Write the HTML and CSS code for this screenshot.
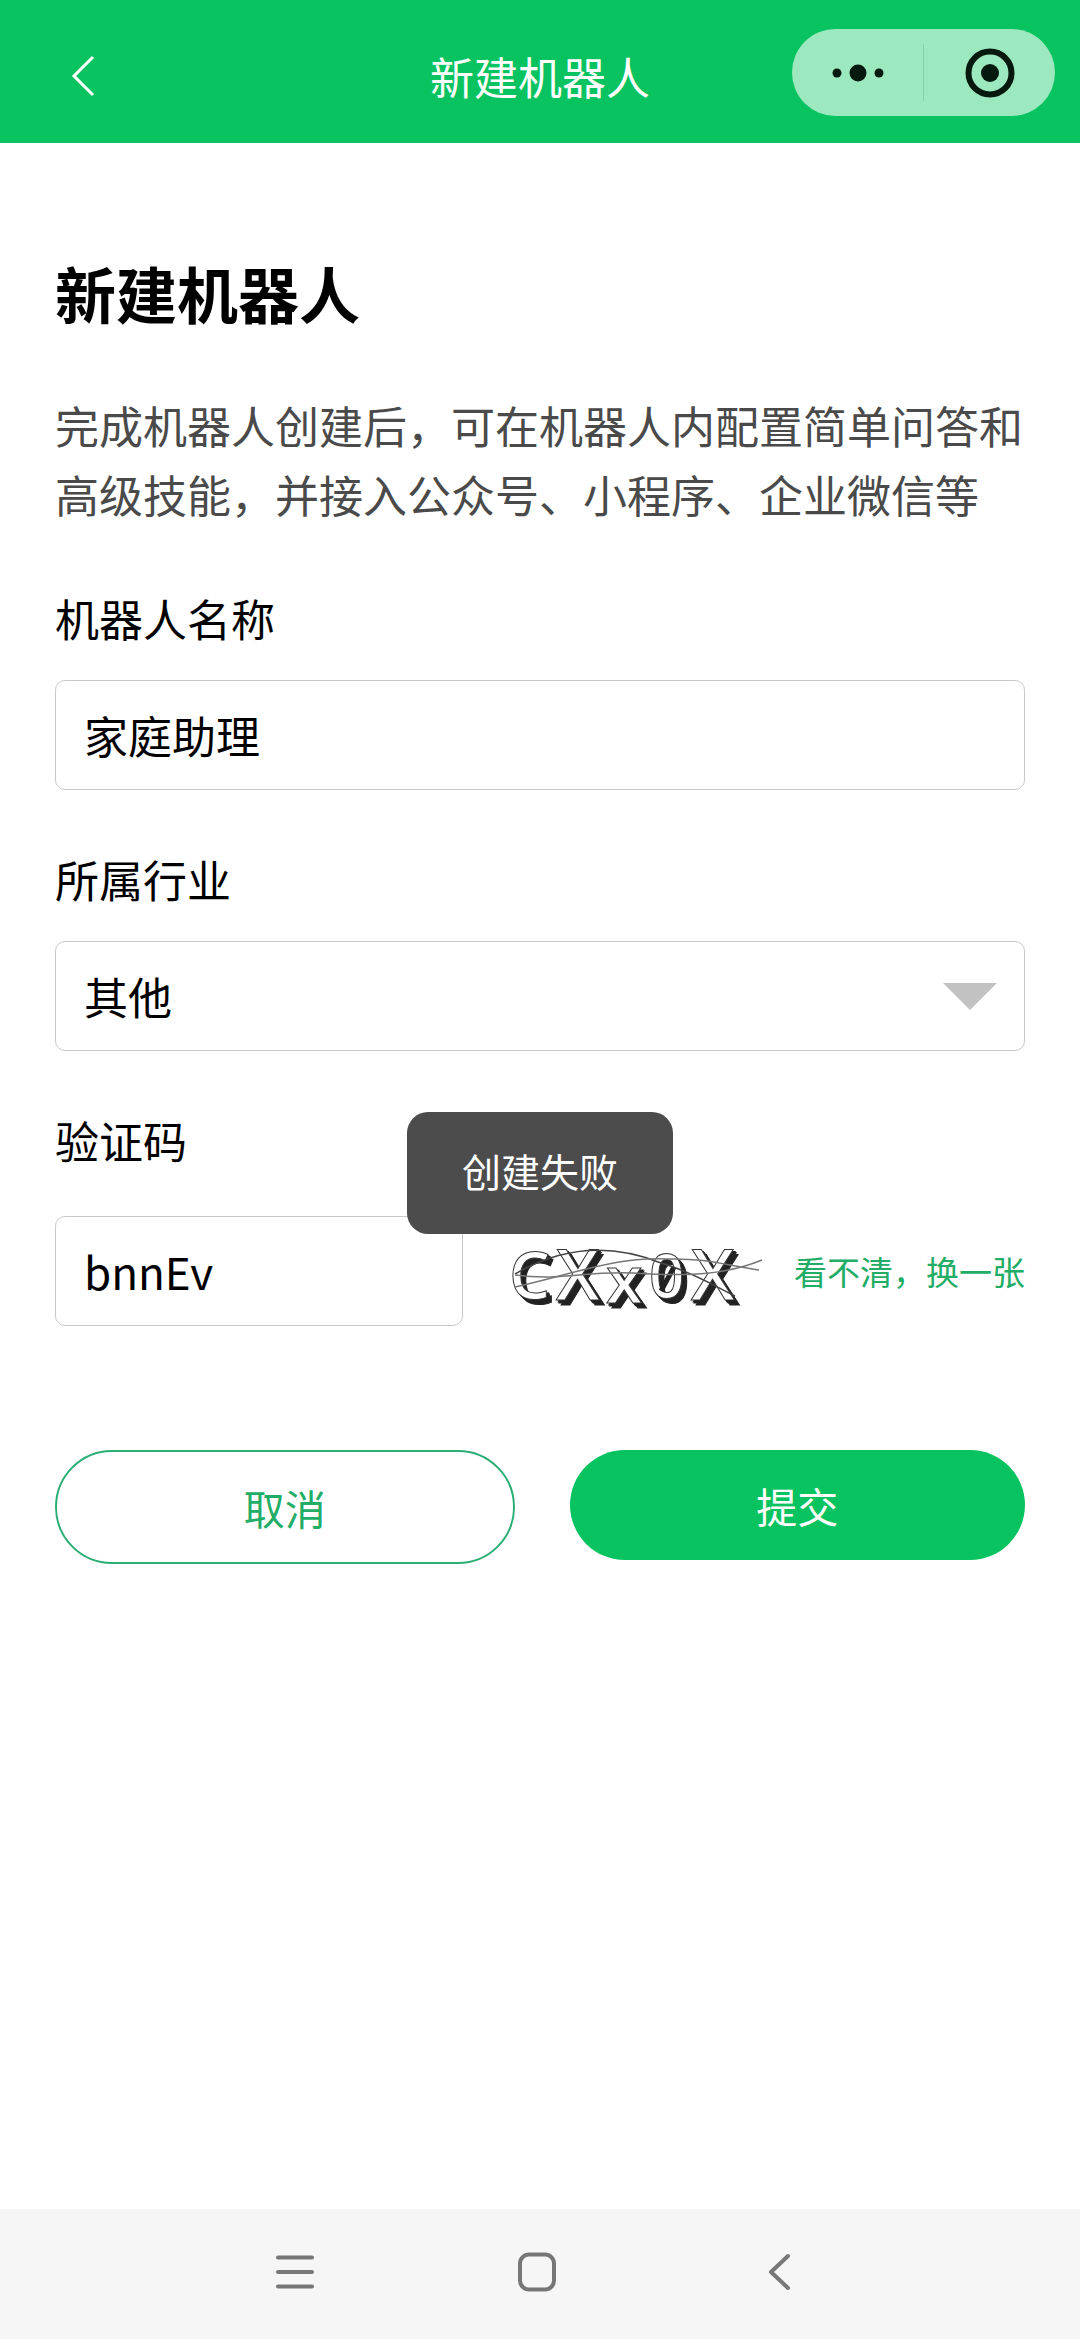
FILE: index.html
```html
<!DOCTYPE html>
<html lang="zh-CN">
    <head>
        <meta charset="utf-8">
        <meta name="viewport" content="width=device-width, initial-scale=1">
        <title>新建机器人</title>
        <link rel="stylesheet" href="styles.css">
    </head>
    <body>
        <header class="header">
            <button class="icon-button back" type="button" aria-label="返回">
                <svg width="26" height="44" viewBox="0 0 26 44"><path d="M23 3 L4 22 L23 41" fill="none" stroke="#fff" stroke-width="3"/></svg>
            </button>
            <div class="title">新建机器人</div>
            <div class="capsule">
                <button class="icon-button" type="button" aria-label="更多">
                    <svg width="52" height="50" viewBox="0 0 52 50" fill="#06190e"><circle cx="5" cy="25" r="4.5"/><circle cx="26" cy="25" r="8.5"/><circle cx="47" cy="25" r="4.5"/></svg>
                </button>
                <span class="divider"></span>
                <button class="icon-button" type="button" aria-label="关闭">
                    <svg width="50" height="50" viewBox="0 0 50 50"><circle cx="25" cy="25" r="21.5" fill="none" stroke="#06190e" stroke-width="6"/><circle cx="25" cy="25" r="9" fill="#06190e"/></svg>
                </button>
            </div>
        </header>

        <main class="content">
            <h1>新建机器人</h1>
            <p class="intro">完成机器人创建后，可在机器人内配置简单问答和高级技能，并接入公众号、小程序、企业微信等</p>
            <form>
                <div class="field">
                    <label for="name">机器人名称</label>
                    <input class="box" id="name" type="text" value="家庭助理">
                </div>
                <div class="field">
                    <label for="industry">所属行业</label>
                    <div class="select">
                        <select class="box" id="industry">
                            <option>其他</option>
                        </select>
                    </div>
                </div>
                <div class="field field-code">
                    <label for="code">验证码</label>
                    <div class="code-row">
                        <input class="box" id="code" type="text" value="bnnEv">
                        <svg class="captcha" viewBox="0 0 271 110" role="img" aria-label="验证码图片">
                            <g class="letters">
                                <text x="6" y="83" font-size="65">C</text>
                                <text x="53" y="84" font-size="70">X</text>
                                <text x="103" y="87" font-size="66">x</text>
                                <text x="146" y="82" font-size="62">0</text>
                                <text x="188" y="84" font-size="70">X</text>
                            </g>
                            <path d="M158 75 L171 51" stroke="#222" stroke-width="5"/>
                            <g fill="none" stroke-width="1.5">
                                <path d="M12 58 C60 30 110 28 158 47 C190 56 215 72 232 80" stroke="#444"/>
                                <path d="M12 71 C70 58 115 40 165 43 C205 42 225 50 256 54" stroke="#777"/>
                                <path d="M12 59 C60 65 80 55 130 57 C190 61 225 58 259 44" stroke="#777"/>
                            </g>
                        </svg>
                        <a class="refresh" href="#">看不清，换一张</a>
                    </div>
                </div>
                <div class="actions">
                    <button class="button cancel" type="button">取消</button>
                    <button class="button submit" type="button">提交</button>
                </div>
            </form>
        </main>

        <div class="toast" role="alert">创建失败</div>

        <nav class="navbar">
            <button class="icon-button" type="button" aria-label="菜单">
                <svg width="44" height="44" viewBox="0 0 44 44"><path d="M5 7.500H39M5 22H39M5 36.500H39"/></svg>
            </button>
            <button class="icon-button" type="button" aria-label="主页">
                <svg width="44" height="44" viewBox="0 0 44 44"><rect x="5" y="4.500" width="34" height="35" rx="9"/></svg>
            </button>
            <button class="icon-button" type="button" aria-label="返回">
                <svg width="44" height="44" viewBox="0 0 44 44"><path d="M31 6 L14 22 L31 38"/></svg>
            </button>
        </nav>
    </body>
</html>
```
FILE: styles.css
```css
body {
    margin: 0;
    min-height: 100vh;
    display: flex;
    flex-direction: column;
    background-color: #fff;
    color: #000;
    font-family: "Noto Sans CJK SC", sans-serif;
    font-size: 44px;
    line-height: 64px;
}
svg {
    display: block;
}
.icon-button {
    background: none;
    border: none;
    padding: 0;
}

/* top bar */
.header {
    position: relative;
    box-sizing: border-box;
    height: 143px;
    padding: 8px 70px 0;
    display: grid;
    grid-template-columns: 1fr auto 1fr;
    align-items: center;
    background-color: #09c360;
    color: #fff;
}
.back {
    justify-self: start;
}
.capsule {
    position: absolute;
    top: 29px;
    right: 25px;
    width: 263px;
    height: 87px;
    border-radius: 44px;
    display: grid;
    grid-template-columns: 1fr 1px 1fr;
    align-items: center;
    justify-items: center;
    background-color: #9ce8bf;
}
.divider {
    width: 1px;
    height: 57px;
    background-color: #86d5ab;
}

/* form */
.content {
    flex: 1;
    padding: 105px 55px 0;
}
h1 {
    margin: 0 0 53px;
    font-size: 61px;
    line-height: 90px;
}
.intro {
    margin: 0;
    line-height: 69px;
    color: #4a4a4a;
}
.field {
    margin-top: 57px;
}
.field label {
    display: block;
    margin-bottom: 30px;
}
.field-code label {
    margin-bottom: 44px;
}
.box {
    display: block;
    box-sizing: border-box;
    width: 100%;
    height: 110px;
    padding: 0 28px;
    border: 1px solid #c8c8c8;
    border-radius: 10px;
    background-color: #fff;
    color: #000;
    font: inherit;
    appearance: none;
}
.select {
    position: relative;
}
.select::after {
    content: "";
    position: absolute;
    top: 42px;
    right: 28px;
    border: 27px solid transparent;
    border-top-color: #c2c2c2;
    border-bottom: none;
    pointer-events: none;
}
.code-row {
    display: flex;
    align-items: center;
}
.code-row .box {
    flex: 1;
    min-width: 0;
}
.captcha {
    width: 271px;
    height: 110px;
    margin: 0 20px 0 40px;
}
/* outlined letters with a hard shadow */
.letters {
    fill: #fff;
    stroke: #333;
    stroke-width: 1;
    font-family: "Open Sans", sans-serif;
    font-weight: 600;
    filter: drop-shadow(2px 2px 0 #222) drop-shadow(3px 3px 0 #222);
}
.refresh {
    font-size: 33px;
    color: #22ad66;
    text-decoration: none;
    white-space: nowrap;
}
.actions {
    display: flex;
    align-items: flex-start;
    gap: 55px;
    margin-top: 124px;
}
.button {
    box-sizing: content-box;
    flex: 1;
    height: 110px;
    padding: 0;
    border: none;
    border-radius: 57px;
    font-family: inherit;
    font-size: 41px;
}
.cancel {
    border: 2px solid #2aae73;
    background-color: #fff;
    color: #22ad66;
}
.submit {
    background-color: #09c360;
    color: #fff;
}

.toast {
    position: fixed;
    top: 1112px;
    left: 50%;
    transform: translateX(-50%);
    padding: 26px 55px 32px;
    border-radius: 21px;
    background-color: #4c4c4c;
    color: #fff;
    font-size: 39px;
    white-space: nowrap;
}

/* system buttons */
.navbar {
    box-sizing: border-box;
    height: 130px;
    padding: 0 6px 5px 0;
    display: flex;
    align-items: center;
    justify-content: center;
    gap: 198px;
    background-color: #f6f6f6;
}
.navbar svg {
    fill: none;
    stroke: #777;
    stroke-width: 4;
    stroke-linecap: round;
    stroke-linejoin: round;
}
```
